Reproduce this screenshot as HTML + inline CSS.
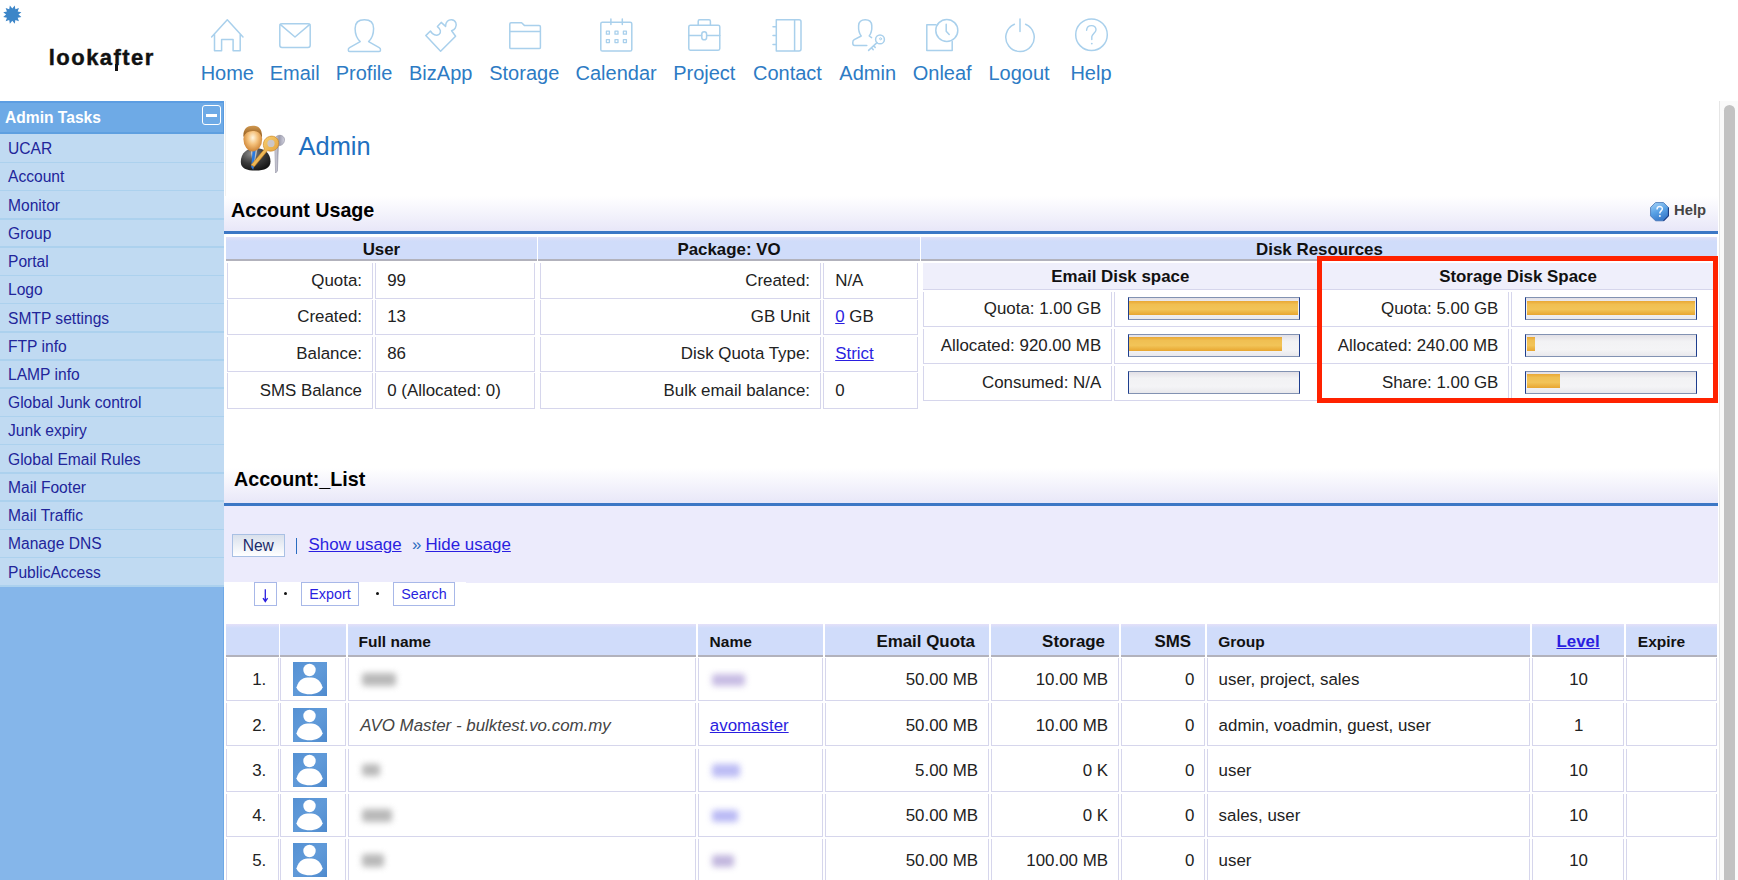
<!DOCTYPE html><html><head><meta charset="utf-8"><style>html,body{margin:0;padding:0;width:1738px;height:880px;overflow:hidden;background:#fff;position:relative;font-family:"Liberation Sans",sans-serif;}.t{position:absolute;white-space:nowrap;}.r{position:absolute;box-sizing:border-box;}svg{position:absolute;overflow:visible;}</style></head><body><svg style="left:0;top:0" width="30" height="30"><polygon points="14.73,5.52 15.40,9.23 18.95,7.95 17.67,11.50 21.38,12.17 18.50,14.60 21.38,17.03 17.67,17.70 18.95,21.25 15.40,19.97 14.73,23.68 12.30,20.80 9.87,23.68 9.20,19.97 5.65,21.25 6.93,17.70 3.22,17.03 6.10,14.60 3.22,12.17 6.93,11.50 5.65,7.95 9.20,9.23 9.87,5.52 12.30,8.40" fill="#3d86c8"/></svg><div class="t" style="top:47.18px;font-size:22px;line-height:22px;color:#111;font-weight:bold;left:48.80px;letter-spacing:1.45px;-webkit-text-stroke:0.45px #111;">lookafter</div><div class="r" style="left:114.60px;top:64.00px;width:3.00px;height:7.20px;background:#111;"></div><div class="t" style="top:62.87px;font-size:20px;line-height:20px;color:#2d7bc4;left:-272.70px;width:1000px;text-align:center;">Home</div><svg style="left:211.4px;top:19.1px" width="34" height="34" fill="none" stroke="#a9d0ec" stroke-width="1.5" stroke-linejoin="round" stroke-linecap="round"><path d="M0.6,18 L16.3,0.8 L32,18 M3.5,14.8 V31.8 H10.6 V20.4 H22.1 V31.8 H29.2 V14.8"/></svg><div class="t" style="top:62.87px;font-size:20px;line-height:20px;color:#2d7bc4;left:-205.25px;width:1000px;text-align:center;">Email</div><svg style="left:278.8px;top:23.0px" width="34" height="34" fill="none" stroke="#a9d0ec" stroke-width="1.5" stroke-linejoin="round" stroke-linecap="round"><rect x="0.8" y="0.8" width="30.4" height="23.6" rx="2.2"/><path d="M1.2,1.4 L16,14 L30.8,1.4"/></svg><div class="t" style="top:62.87px;font-size:20px;line-height:20px;color:#2d7bc4;left:-135.95px;width:1000px;text-align:center;">Profile</div><svg style="left:347.9px;top:18.6px" width="34" height="34" fill="none" stroke="#a9d0ec" stroke-width="1.5" stroke-linejoin="round" stroke-linecap="round"><path d="M12.2,22.6 C8.6,19.2 7.1,14.6 7.1,9.4 C7.1,3.4 10.6,0.8 16.4,0.8 C22.2,0.8 25.6,3.4 25.6,9.4 C25.6,14.6 24.1,19.2 20.6,22.6 L31.2,28.6 C33.2,29.8 32.8,32.6 30.8,32.6 L2,32.6 C0,32.6 -0.4,29.8 1.6,28.6 Z"/></svg><div class="t" style="top:62.87px;font-size:20px;line-height:20px;color:#2d7bc4;left:-59.30px;width:1000px;text-align:center;">BizApp</div><svg style="left:425.0px;top:18.6px" width="34" height="34" fill="none" stroke="#a9d0ec" stroke-width="1.5" stroke-linejoin="round" stroke-linecap="round"><path d="M0.8,16.6 L5.4,12 C7.6,15.8 11.2,17.2 14,15.4 C16.6,13.4 15.6,10 12.4,7.6 L16.2,3.4 L20.6,7.4 C20.4,2.8 23.4,0.6 26.6,0.8 C30.8,1.2 32.4,5.6 30.4,8.8 C29.6,10.2 28.2,11.2 26.6,11.8 L30.6,17.2 L15.6,32.2 Z"/></svg><div class="t" style="top:62.87px;font-size:20px;line-height:20px;color:#2d7bc4;left:24.25px;width:1000px;text-align:center;">Storage</div><svg style="left:508.5px;top:21.5px" width="34" height="34" fill="none" stroke="#a9d0ec" stroke-width="1.5" stroke-linejoin="round" stroke-linecap="round"><path d="M0.8,25.6 V2 Q0.8,0.8 2,0.8 H12.6 L15.6,3.6 H30.2 Q31.4,3.6 31.4,4.8 V25.4 Q31.4,26.6 30.2,26.6 H2 Q0.8,26.6 0.8,25.4 Z M0.8,9.4 H31.4"/></svg><div class="t" style="top:62.87px;font-size:20px;line-height:20px;color:#2d7bc4;left:116.15px;width:1000px;text-align:center;">Calendar</div><svg style="left:600.1px;top:18.7px" width="34" height="34" fill="none" stroke="#a9d0ec" stroke-width="1.5" stroke-linejoin="round" stroke-linecap="round"><rect x="0.8" y="3.2" width="31" height="28.8" rx="1.6"/><path d="M10.9,0 V5.6 M22.3,0 V5.6"/><g stroke-width="1.3"><rect x="6.4" y="12.2" width="3" height="3"/><rect x="15" y="12.2" width="3" height="3"/><rect x="23.4" y="12.2" width="3" height="3"/><rect x="6.4" y="20.6" width="3" height="3"/><rect x="15" y="20.6" width="3" height="3"/><rect x="23.4" y="20.6" width="3" height="3"/></g></svg><div class="t" style="top:62.87px;font-size:20px;line-height:20px;color:#2d7bc4;left:204.25px;width:1000px;text-align:center;">Project</div><svg style="left:688.0px;top:19.2px" width="34" height="34" fill="none" stroke="#a9d0ec" stroke-width="1.5" stroke-linejoin="round" stroke-linecap="round"><rect x="0.8" y="6.2" width="31" height="25" rx="1.6"/><path d="M10.2,6.2 V2.2 Q10.2,0.8 11.6,0.8 H21 Q22.4,0.8 22.4,2.2 V6.2 M0.8,16.6 H13.6 M18.8,16.6 H31.8"/><rect x="13.8" y="12.8" width="4.8" height="8" rx="2.4"/></svg><div class="t" style="top:62.87px;font-size:20px;line-height:20px;color:#2d7bc4;left:287.45px;width:1000px;text-align:center;">Contact</div><svg style="left:772.7px;top:18.7px" width="34" height="34" fill="none" stroke="#a9d0ec" stroke-width="1.5" stroke-linejoin="round" stroke-linecap="round"><path d="M3.3,0.8 H26 Q28,0.8 28,2.8 V30 Q28,32 26,32 H3.3 Z M21.6,0.8 V32 M0,7.8 H3.3 M0,16.6 H3.3 M0,25.4 H3.3"/></svg><div class="t" style="top:62.87px;font-size:20px;line-height:20px;color:#2d7bc4;left:367.70px;width:1000px;text-align:center;">Admin</div><svg style="left:851.9px;top:19.0px" width="34" height="34" fill="none" stroke="#a9d0ec" stroke-width="1.5" stroke-linejoin="round" stroke-linecap="round"><path d="M9.2,17 C7,14 6.4,9.8 6.6,6.6 C6.9,2.6 9.4,0.8 13.2,0.8 C17,0.8 19.5,2.6 19.8,6.6 C20,9.8 19.4,14 17.2,17 L19.6,18.6 M9.2,17 L2.2,20.6 C0.2,21.8 0.2,26.4 2.6,26.4 L14.8,26.4"/><circle cx="28" cy="20.4" r="4.4"/><circle cx="28.6" cy="19.8" r="1" stroke-width="1"/><path d="M25,23.6 L16.6,31.4 M19.4,28.8 L21.2,30.6 M21.6,26.8 L23.2,28.4"/></svg><div class="t" style="top:62.87px;font-size:20px;line-height:20px;color:#2d7bc4;left:442.20px;width:1000px;text-align:center;">Onleaf</div><svg style="left:926.0px;top:19.2px" width="34" height="34" fill="none" stroke="#a9d0ec" stroke-width="1.5" stroke-linejoin="round" stroke-linecap="round"><path d="M10,5.8 H0.8 V31.6 H26.2 V22.4"/><circle cx="20.8" cy="11.4" r="11"/><path d="M20.2,5.2 V12.2 L23.2,15.4"/></svg><div class="t" style="top:62.87px;font-size:20px;line-height:20px;color:#2d7bc4;left:519.05px;width:1000px;text-align:center;">Logout</div><svg style="left:1004.5px;top:18.7px" width="34" height="34" fill="none" stroke="#a9d0ec" stroke-width="1.5" stroke-linejoin="round" stroke-linecap="round"><path d="M15,0 V12.4"/><path d="M9.4,5.2 A14.2,14.2 0 1 0 20.6,5.2"/></svg><div class="t" style="top:62.87px;font-size:20px;line-height:20px;color:#2d7bc4;left:591.00px;width:1000px;text-align:center;">Help</div><svg style="left:1075.0px;top:17.7px" width="34" height="34" fill="none" stroke="#a9d0ec" stroke-width="1.5" stroke-linejoin="round" stroke-linecap="round"><circle cx="16.5" cy="16.7" r="15.8"/><path d="M11.6,12.2 C11.8,8.8 14,7.6 16.6,7.6 C19.2,7.6 21.2,9.4 21,12 C20.8,14.6 17.4,15.8 16.8,18.6 V21.6" stroke-width="1.4"/><circle cx="16.8" cy="25.6" r="0.9" fill="#a9d0ec" stroke="none"/></svg><div class="r" style="left:224.50px;top:100.50px;width:1.10px;height:95.50px;background:#f0f0f0;"></div><div class="r" style="left:0.00px;top:101.00px;width:224.00px;height:32.50px;background:#6eaae6;border-top:2px solid #5c9de2;border-bottom:2px solid #5e9fe0;border-right:1px solid #5a9be0;"></div><div class="t" style="top:109.89px;font-size:15.6px;line-height:15.6px;color:#fff;font-weight:bold;left:5.00px;">Admin Tasks</div><div class="r" style="left:201.70px;top:105.20px;width:19.70px;height:19.70px;border:1.6px solid #fff;border-radius:3px;"></div><div class="r" style="left:205.80px;top:113.90px;width:11.20px;height:2.80px;background:#fff;"></div><div class="r" style="left:0.00px;top:133.50px;width:224.00px;height:453.30px;background:#c0daf2;"></div><div class="r" style="left:0.00px;top:161.60px;width:224.00px;height:1.60px;background:#acd1ee;"></div><div class="t" style="top:141.19px;font-size:15.6px;line-height:15.6px;color:#22259a;left:8.00px;">UCAR</div><div class="r" style="left:0.00px;top:189.83px;width:224.00px;height:1.60px;background:#acd1ee;"></div><div class="t" style="top:169.42px;font-size:15.6px;line-height:15.6px;color:#22259a;left:8.00px;">Account</div><div class="r" style="left:0.00px;top:218.06px;width:224.00px;height:1.60px;background:#acd1ee;"></div><div class="t" style="top:197.65px;font-size:15.6px;line-height:15.6px;color:#22259a;left:8.00px;">Monitor</div><div class="r" style="left:0.00px;top:246.29px;width:224.00px;height:1.60px;background:#acd1ee;"></div><div class="t" style="top:225.88px;font-size:15.6px;line-height:15.6px;color:#22259a;left:8.00px;">Group</div><div class="r" style="left:0.00px;top:274.52px;width:224.00px;height:1.60px;background:#acd1ee;"></div><div class="t" style="top:254.11px;font-size:15.6px;line-height:15.6px;color:#22259a;left:8.00px;">Portal</div><div class="r" style="left:0.00px;top:302.75px;width:224.00px;height:1.60px;background:#acd1ee;"></div><div class="t" style="top:282.34px;font-size:15.6px;line-height:15.6px;color:#22259a;left:8.00px;">Logo</div><div class="r" style="left:0.00px;top:330.98px;width:224.00px;height:1.60px;background:#acd1ee;"></div><div class="t" style="top:310.57px;font-size:15.6px;line-height:15.6px;color:#22259a;left:8.00px;">SMTP settings</div><div class="r" style="left:0.00px;top:359.21px;width:224.00px;height:1.60px;background:#acd1ee;"></div><div class="t" style="top:338.80px;font-size:15.6px;line-height:15.6px;color:#22259a;left:8.00px;">FTP info</div><div class="r" style="left:0.00px;top:387.44px;width:224.00px;height:1.60px;background:#acd1ee;"></div><div class="t" style="top:367.03px;font-size:15.6px;line-height:15.6px;color:#22259a;left:8.00px;">LAMP info</div><div class="r" style="left:0.00px;top:415.67px;width:224.00px;height:1.60px;background:#acd1ee;"></div><div class="t" style="top:395.26px;font-size:15.6px;line-height:15.6px;color:#22259a;left:8.00px;">Global Junk control</div><div class="r" style="left:0.00px;top:443.90px;width:224.00px;height:1.60px;background:#acd1ee;"></div><div class="t" style="top:423.49px;font-size:15.6px;line-height:15.6px;color:#22259a;left:8.00px;">Junk expiry</div><div class="r" style="left:0.00px;top:472.13px;width:224.00px;height:1.60px;background:#acd1ee;"></div><div class="t" style="top:451.72px;font-size:15.6px;line-height:15.6px;color:#22259a;left:8.00px;">Global Email Rules</div><div class="r" style="left:0.00px;top:500.36px;width:224.00px;height:1.60px;background:#acd1ee;"></div><div class="t" style="top:479.95px;font-size:15.6px;line-height:15.6px;color:#22259a;left:8.00px;">Mail Footer</div><div class="r" style="left:0.00px;top:528.59px;width:224.00px;height:1.60px;background:#acd1ee;"></div><div class="t" style="top:508.18px;font-size:15.6px;line-height:15.6px;color:#22259a;left:8.00px;">Mail Traffic</div><div class="r" style="left:0.00px;top:556.82px;width:224.00px;height:1.60px;background:#acd1ee;"></div><div class="t" style="top:536.41px;font-size:15.6px;line-height:15.6px;color:#22259a;left:8.00px;">Manage DNS</div><div class="r" style="left:0.00px;top:585.05px;width:224.00px;height:1.60px;background:#acd1ee;"></div><div class="t" style="top:564.64px;font-size:15.6px;line-height:15.6px;color:#22259a;left:8.00px;">PublicAccess</div><div class="r" style="left:0.00px;top:586.80px;width:224.00px;height:293.20px;background:#85b6ea;border-right:1px solid #6fa9e8;"></div><div class="r" style="left:1718.50px;top:100.50px;width:19.50px;height:779.50px;background:#fafafa;border-left:1px solid #e6e6e6;"></div><div class="r" style="left:1724.10px;top:105.00px;width:11.10px;height:785.00px;background:#c2c2c2;border-radius:5.5px;"></div><svg style="left:240px;top:125px" width="46" height="50" viewBox="0 0 46 50">
<defs>
<radialGradient id="face" cx="0.5" cy="0.45" r="0.6"><stop offset="0" stop-color="#fff6e0"/><stop offset="0.45" stop-color="#f4c07a"/><stop offset="1" stop-color="#c87a2a"/></radialGradient>
<linearGradient id="hair" x1="0" y1="0" x2="0" y2="1"><stop offset="0" stop-color="#d09850"/><stop offset="1" stop-color="#8a5418"/></linearGradient>
<radialGradient id="suit" cx="0.35" cy="0.25" r="0.8"><stop offset="0" stop-color="#8a8a8a"/><stop offset="0.55" stop-color="#3a3a3a"/><stop offset="1" stop-color="#141414"/></radialGradient>
<linearGradient id="gold" x1="0" y1="0" x2="1" y2="1"><stop offset="0" stop-color="#ffe48a"/><stop offset="1" stop-color="#dc8c22"/></linearGradient>
<linearGradient id="silver" x1="0" y1="0" x2="1" y2="0"><stop offset="0" stop-color="#eeeef4"/><stop offset="0.5" stop-color="#9a9aac"/><stop offset="1" stop-color="#d4d4e0"/></linearGradient>
</defs>
<path d="M37,11 C41,9 45,11.5 44.5,15.5 C44,19 41,21 38.4,20.6 L37.4,46 L35.6,48 L34.8,21.5 C32.6,19.5 33.5,13 37,11 Z" fill="url(#silver)" stroke="#8a8a9c" stroke-width="0.6"/>
<path d="M0.8,37 C0.8,28 7,23 15.5,23 C24,23 30.5,28 30.5,36.5 C30.5,43 24.5,45.6 15.6,45.6 C6.6,45.6 0.8,43.5 0.8,37 Z" fill="url(#suit)"/>
<path d="M10.5,24 L13.5,44 L17.5,24 Z" fill="#fff" opacity="0.55"/>
<path d="M12.6,25 L11.2,42 L13.2,45 L15.6,25 Z" fill="#2a7ae0"/>
<ellipse cx="12.8" cy="14" rx="9.4" ry="12.4" fill="url(#face)"/>
<path d="M3.4,12 C3,4 7,0.8 12.8,0.8 C19,0.8 22.6,4.5 21.8,12.5 C20.6,8 17.5,6 12.6,6 C8,6 5,8 3.4,12 Z" fill="url(#hair)"/>
<path d="M11,40 L24.5,24 C22,20 23.5,13 29.5,11.4 C35,10 39.5,14 38.6,19.6 C37.8,25 32,27.4 27.6,25.6 L14.4,41.6 Z" fill="url(#gold)" stroke="#c47a1a" stroke-width="0.6"/>
<circle cx="31" cy="18.4" r="3.6" fill="#c8c8d4" opacity="0.9"/>
</svg><div class="t" style="top:134.10px;font-size:25.4px;line-height:25.4px;color:#2270c0;left:298.60px;">Admin</div><div class="r" style="left:224.00px;top:196.00px;width:1494.00px;height:34.90px;background:linear-gradient(#fff,#e8e7f8);"></div><div class="r" style="left:224.00px;top:230.90px;width:1494.00px;height:3.00px;background:#3c77c5;"></div><div class="t" style="top:200.82px;font-size:19.7px;line-height:19.7px;color:#000;font-weight:bold;left:231.00px;">Account Usage</div><svg style="left:1649.6px;top:201.6px" width="19" height="19.4" viewBox="0 0 20 20.4">
<defs><linearGradient id="hb" x1="0" y1="0" x2="0.4" y2="1"><stop offset="0" stop-color="#a8d4f8"/><stop offset="0.55" stop-color="#5aa2e6"/><stop offset="1" stop-color="#3a7ccc"/></linearGradient></defs>
<polygon points="5.8,0.6 14.2,0.6 19.4,5.8 19.4,14.6 14.2,19.8 5.8,19.8 0.6,14.6 0.6,5.8" fill="url(#hb)" stroke="#3a6ab0" stroke-width="0.8"/>
<path d="M19.4,5.8 V14.6 L14.2,19.8" fill="none" stroke="#1a3a80" stroke-width="1.1"/>
<path d="M7.4,7.8 C7.4,5.8 8.6,4.8 10.2,4.8 C12,4.8 13.1,5.9 13,7.4 C12.9,9 10.8,9.6 10.4,11.4 V12.2" fill="none" stroke="#f4f8ff" stroke-width="1.6"/>
<circle cx="10.4" cy="14.8" r="1.05" fill="#f4f8ff"/>
</svg><div class="t" style="top:203.07px;font-size:14.8px;line-height:14.8px;color:#444;font-weight:bold;left:1674.00px;">Help</div><div class="r" style="left:226.00px;top:236.80px;width:310.80px;height:22.30px;background:linear-gradient(#e4e0f8 0px,#d0dcfa 4px,#d0dcfa);"></div><div class="r" style="left:226.00px;top:259.10px;width:310.80px;height:1.90px;background:#b2b2bc;"></div><div class="t" style="top:242.09px;font-size:16.9px;line-height:16.9px;color:#111;font-weight:bold;left:-118.60px;width:1000px;text-align:center;">User</div><div class="r" style="left:538.20px;top:236.80px;width:381.70px;height:22.30px;background:linear-gradient(#e4e0f8 0px,#d0dcfa 4px,#d0dcfa);"></div><div class="r" style="left:538.20px;top:259.10px;width:381.70px;height:1.90px;background:#b2b2bc;"></div><div class="t" style="top:242.09px;font-size:16.9px;line-height:16.9px;color:#111;font-weight:bold;left:229.05px;width:1000px;text-align:center;">Package: VO</div><div class="r" style="left:921.40px;top:236.80px;width:796.10px;height:22.30px;background:linear-gradient(#e4e0f8 0px,#d0dcfa 4px,#d0dcfa);"></div><div class="r" style="left:921.40px;top:259.10px;width:796.10px;height:1.90px;background:#b2b2bc;"></div><div class="t" style="top:242.09px;font-size:16.9px;line-height:16.9px;color:#111;font-weight:bold;left:819.45px;width:1000px;text-align:center;">Disk Resources</div><div class="r" style="left:227.30px;top:263.20px;width:145.80px;height:35.40px;background:#fff;border:1px solid #d6d6ec;border-top:none;"></div><div class="r" style="left:374.80px;top:263.20px;width:160.20px;height:35.40px;background:#fff;border:1px solid #d6d6ec;border-top:none;"></div><div class="t" style="top:272.79px;font-size:16.9px;line-height:16.9px;color:#222;left:-638.00px;width:1000px;text-align:right;">Quota:</div><div class="t" style="top:272.79px;font-size:16.9px;line-height:16.9px;color:#222;left:387.20px;">99</div><div class="r" style="left:227.30px;top:299.90px;width:145.80px;height:35.40px;background:#fff;border:1px solid #d6d6ec;border-top:none;"></div><div class="r" style="left:374.80px;top:299.90px;width:160.20px;height:35.40px;background:#fff;border:1px solid #d6d6ec;border-top:none;"></div><div class="t" style="top:309.49px;font-size:16.9px;line-height:16.9px;color:#222;left:-638.00px;width:1000px;text-align:right;">Created:</div><div class="t" style="top:309.49px;font-size:16.9px;line-height:16.9px;color:#222;left:387.20px;">13</div><div class="r" style="left:227.30px;top:336.60px;width:145.80px;height:35.40px;background:#fff;border:1px solid #d6d6ec;border-top:none;"></div><div class="r" style="left:374.80px;top:336.60px;width:160.20px;height:35.40px;background:#fff;border:1px solid #d6d6ec;border-top:none;"></div><div class="t" style="top:346.19px;font-size:16.9px;line-height:16.9px;color:#222;left:-638.00px;width:1000px;text-align:right;">Balance:</div><div class="t" style="top:346.19px;font-size:16.9px;line-height:16.9px;color:#222;left:387.20px;">86</div><div class="r" style="left:227.30px;top:373.30px;width:145.80px;height:35.40px;background:#fff;border:1px solid #d6d6ec;border-top:none;"></div><div class="r" style="left:374.80px;top:373.30px;width:160.20px;height:35.40px;background:#fff;border:1px solid #d6d6ec;border-top:none;"></div><div class="t" style="top:382.89px;font-size:16.9px;line-height:16.9px;color:#222;left:-638.00px;width:1000px;text-align:right;">SMS Balance</div><div class="t" style="top:382.89px;font-size:16.9px;line-height:16.9px;color:#222;left:387.20px;">0 (Allocated: 0)</div><div class="r" style="left:539.80px;top:263.20px;width:281.60px;height:35.40px;background:#fff;border:1px solid #d6d6ec;border-top:none;"></div><div class="r" style="left:823.10px;top:263.20px;width:95.00px;height:35.40px;background:#fff;border:1px solid #d6d6ec;border-top:none;"></div><div class="t" style="top:272.79px;font-size:16.9px;line-height:16.9px;color:#222;left:-190.00px;width:1000px;text-align:right;">Created:</div><div class="t" style="top:272.79px;font-size:16.9px;line-height:16.9px;color:#222;left:835.20px;">N/A</div><div class="r" style="left:539.80px;top:299.90px;width:281.60px;height:35.40px;background:#fff;border:1px solid #d6d6ec;border-top:none;"></div><div class="r" style="left:823.10px;top:299.90px;width:95.00px;height:35.40px;background:#fff;border:1px solid #d6d6ec;border-top:none;"></div><div class="t" style="top:309.49px;font-size:16.9px;line-height:16.9px;color:#222;left:-190.00px;width:1000px;text-align:right;">GB Unit</div><div class="t" style="top:309.49px;font-size:16.9px;line-height:16.9px;color:#222;left:835.20px;"><span style="color:#2a1ee0;text-decoration:underline">0</span> GB</div><div class="r" style="left:539.80px;top:336.60px;width:281.60px;height:35.40px;background:#fff;border:1px solid #d6d6ec;border-top:none;"></div><div class="r" style="left:823.10px;top:336.60px;width:95.00px;height:35.40px;background:#fff;border:1px solid #d6d6ec;border-top:none;"></div><div class="t" style="top:346.19px;font-size:16.9px;line-height:16.9px;color:#222;left:-190.00px;width:1000px;text-align:right;">Disk Quota Type:</div><div class="t" style="top:346.19px;font-size:16.9px;line-height:16.9px;color:#222;left:835.20px;"><span style="color:#2a1ee0;text-decoration:underline">Strict</span></div><div class="r" style="left:539.80px;top:373.30px;width:281.60px;height:35.40px;background:#fff;border:1px solid #d6d6ec;border-top:none;"></div><div class="r" style="left:823.10px;top:373.30px;width:95.00px;height:35.40px;background:#fff;border:1px solid #d6d6ec;border-top:none;"></div><div class="t" style="top:382.89px;font-size:16.9px;line-height:16.9px;color:#222;left:-190.00px;width:1000px;text-align:right;">Bulk email balance:</div><div class="t" style="top:382.89px;font-size:16.9px;line-height:16.9px;color:#222;left:835.20px;">0</div><div class="r" style="left:922.70px;top:263.20px;width:395.30px;height:27.00px;background:#efeffb;border-bottom:1px solid #d6d6ec;"></div><div class="t" style="top:269.29px;font-size:16.9px;line-height:16.9px;color:#111;font-weight:bold;left:620.35px;width:1000px;text-align:center;">Email Disk space</div><div class="r" style="left:1319.60px;top:263.20px;width:396.80px;height:27.00px;background:#efeffb;border-bottom:1px solid #d6d6ec;"></div><div class="t" style="top:269.29px;font-size:16.9px;line-height:16.9px;color:#111;font-weight:bold;left:1018.00px;width:1000px;text-align:center;">Storage Disk Space</div><div class="r" style="left:923.10px;top:292.40px;width:188.70px;height:34.90px;background:#fff;border:1px solid #d6d6ec;border-top:none;"></div><div class="r" style="left:1114.00px;top:292.40px;width:204.60px;height:34.90px;background:#fff;border:1px solid #d6d6ec;border-top:none;"></div><div class="t" style="top:301.09px;font-size:16.9px;line-height:16.9px;color:#222;left:101.20px;width:1000px;text-align:right;">Quota: 1.00 GB</div><div class="r" style="left:1127.80px;top:297.40px;width:172.20px;height:22.90px;background:linear-gradient(#e2e0e6,#f2f2f4 30%,#f4f4f6 70%,#e8e8ec);border-top:1.4px solid #8292b2;border-bottom:1.4px solid #8292b2;border-left:1.4px solid #1e3e8e;border-right:1.4px solid #1e3e8e;"></div><div class="r" style="left:1129.20px;top:300.60px;width:169.20px;height:14.10px;background:linear-gradient(#e9a835 0,#f0bf52 25%,#f2c458 60%,#e8a630 100%);"></div><div class="r" style="left:923.10px;top:329.15px;width:188.70px;height:34.90px;background:#fff;border:1px solid #d6d6ec;border-top:none;"></div><div class="r" style="left:1114.00px;top:329.15px;width:204.60px;height:34.90px;background:#fff;border:1px solid #d6d6ec;border-top:none;"></div><div class="t" style="top:337.84px;font-size:16.9px;line-height:16.9px;color:#222;left:101.20px;width:1000px;text-align:right;">Allocated: 920.00 MB</div><div class="r" style="left:1127.80px;top:334.15px;width:172.20px;height:22.90px;background:linear-gradient(#e2e0e6,#f2f2f4 30%,#f4f4f6 70%,#e8e8ec);border-top:1.4px solid #8292b2;border-bottom:1.4px solid #8292b2;border-left:1.4px solid #1e3e8e;border-right:1.4px solid #1e3e8e;"></div><div class="r" style="left:1129.20px;top:337.35px;width:152.80px;height:14.10px;background:linear-gradient(#e9a835 0,#f0bf52 25%,#f2c458 60%,#e8a630 100%);"></div><div class="r" style="left:923.10px;top:365.90px;width:188.70px;height:34.90px;background:#fff;border:1px solid #d6d6ec;border-top:none;"></div><div class="r" style="left:1114.00px;top:365.90px;width:204.60px;height:34.90px;background:#fff;border:1px solid #d6d6ec;border-top:none;"></div><div class="t" style="top:374.59px;font-size:16.9px;line-height:16.9px;color:#222;left:101.20px;width:1000px;text-align:right;">Consumed: N/A</div><div class="r" style="left:1127.80px;top:370.90px;width:172.20px;height:22.90px;background:linear-gradient(#e2e0e6,#f2f2f4 30%,#f4f4f6 70%,#e8e8ec);border-top:1.4px solid #8292b2;border-bottom:1.4px solid #8292b2;border-left:1.4px solid #1e3e8e;border-right:1.4px solid #1e3e8e;"></div><div class="r" style="left:1320.00px;top:292.40px;width:189.00px;height:34.90px;background:#fff;border:1px solid #d6d6ec;border-top:none;"></div><div class="r" style="left:1511.10px;top:292.40px;width:205.30px;height:34.90px;background:#fff;border:1px solid #d6d6ec;border-top:none;"></div><div class="t" style="top:301.09px;font-size:16.9px;line-height:16.9px;color:#222;left:498.40px;width:1000px;text-align:right;">Quota: 5.00 GB</div><div class="r" style="left:1525.20px;top:297.40px;width:171.60px;height:22.90px;background:linear-gradient(#e2e0e6,#f2f2f4 30%,#f4f4f6 70%,#e8e8ec);border-top:1.4px solid #8292b2;border-bottom:1.4px solid #8292b2;border-left:1.4px solid #1e3e8e;border-right:1.4px solid #1e3e8e;"></div><div class="r" style="left:1526.60px;top:300.60px;width:168.60px;height:14.10px;background:linear-gradient(#e9a835 0,#f0bf52 25%,#f2c458 60%,#e8a630 100%);"></div><div class="r" style="left:1320.00px;top:329.15px;width:189.00px;height:34.90px;background:#fff;border:1px solid #d6d6ec;border-top:none;"></div><div class="r" style="left:1511.10px;top:329.15px;width:205.30px;height:34.90px;background:#fff;border:1px solid #d6d6ec;border-top:none;"></div><div class="t" style="top:337.84px;font-size:16.9px;line-height:16.9px;color:#222;left:498.40px;width:1000px;text-align:right;">Allocated: 240.00 MB</div><div class="r" style="left:1525.20px;top:334.15px;width:171.60px;height:22.90px;background:linear-gradient(#e2e0e6,#f2f2f4 30%,#f4f4f6 70%,#e8e8ec);border-top:1.4px solid #8292b2;border-bottom:1.4px solid #8292b2;border-left:1.4px solid #1e3e8e;border-right:1.4px solid #1e3e8e;"></div><div class="r" style="left:1526.60px;top:337.35px;width:8.20px;height:14.10px;background:linear-gradient(#e9a835 0,#f0bf52 25%,#f2c458 60%,#e8a630 100%);"></div><div class="r" style="left:1320.00px;top:365.90px;width:189.00px;height:34.90px;background:#fff;border:1px solid #d6d6ec;border-top:none;"></div><div class="r" style="left:1511.10px;top:365.90px;width:205.30px;height:34.90px;background:#fff;border:1px solid #d6d6ec;border-top:none;"></div><div class="t" style="top:374.59px;font-size:16.9px;line-height:16.9px;color:#222;left:498.40px;width:1000px;text-align:right;">Share: 1.00 GB</div><div class="r" style="left:1525.20px;top:370.90px;width:171.60px;height:22.90px;background:linear-gradient(#e2e0e6,#f2f2f4 30%,#f4f4f6 70%,#e8e8ec);border-top:1.4px solid #8292b2;border-bottom:1.4px solid #8292b2;border-left:1.4px solid #1e3e8e;border-right:1.4px solid #1e3e8e;"></div><div class="r" style="left:1526.60px;top:374.10px;width:33.40px;height:14.10px;background:linear-gradient(#e9a835 0,#f0bf52 25%,#f2c458 60%,#e8a630 100%);"></div><div class="r" style="left:1316.50px;top:255.50px;width:401.10px;height:147.40px;border:5px solid #ff2200;"></div><div class="r" style="left:224.00px;top:468.00px;width:1494.00px;height:34.50px;background:linear-gradient(#fff,#e8e7f8);"></div><div class="r" style="left:224.00px;top:502.50px;width:1494.00px;height:3.00px;background:#3c77c5;"></div><div class="t" style="top:469.82px;font-size:19.7px;line-height:19.7px;color:#000;font-weight:bold;left:234.00px;">Account:_List</div><div class="r" style="left:224.00px;top:505.50px;width:1494.00px;height:77.50px;background:#ecebfc;"></div><div class="r" style="left:231.70px;top:533.70px;width:53.10px;height:23.20px;background:linear-gradient(#d9e0ec,#f4f6fa 70%,#fff);border:1px solid #a9c0e4;"></div><div class="t" style="top:538.39px;font-size:15.6px;line-height:15.6px;color:#1a2a6a;left:-241.75px;width:1000px;text-align:center;">New</div><div class="r" style="left:295.60px;top:538.20px;width:1.60px;height:16.00px;background:#2a6cc0;"></div><div class="t" style="top:537.49px;font-size:16.9px;line-height:16.9px;color:#2a1ee0;text-decoration:underline;left:308.60px;">Show usage</div><div class="t" style="top:537.49px;font-size:16.9px;line-height:16.9px;color:#2a6cc0;left:412.00px;">&raquo;</div><div class="t" style="top:537.49px;font-size:16.9px;line-height:16.9px;color:#2a1ee0;text-decoration:underline;left:425.40px;">Hide usage</div><div class="r" style="left:224.00px;top:582.30px;width:241.50px;height:29.70px;background:#fff;"></div><div class="r" style="left:253.60px;top:582.10px;width:23.50px;height:23.60px;background:#fff;border:1px solid #a8b8e8;"></div><div class="t" style="top:586.90px;font-size:14.3px;line-height:14.3px;color:#2a1ee0;left:-234.65px;width:1000px;text-align:center;"></div><svg style="left:258px;top:585px" width="16" height="20" fill="none" stroke="#2a1ee0" stroke-width="1.3"><path d="M7.3,4.3 V16.4 M5.0,13.2 L7.3,16.6 L9.6,13.2"/></svg><div class="r" style="left:284.0px;top:591.8px;width:3.4px;height:3.4px;border-radius:1.7px;background:#111;"></div><div class="r" style="left:301.00px;top:582.10px;width:58.00px;height:23.60px;background:#fff;border:1px solid #a8b8e8;"></div><div class="t" style="top:586.90px;font-size:14.3px;line-height:14.3px;color:#2a1ee0;left:-170.00px;width:1000px;text-align:center;">Export</div><div class="r" style="left:376.1px;top:591.8px;width:3.4px;height:3.4px;border-radius:1.7px;background:#111;"></div><div class="r" style="left:392.90px;top:582.10px;width:62.10px;height:23.60px;background:#fff;border:1px solid #a8b8e8;"></div><div class="t" style="top:586.90px;font-size:14.3px;line-height:14.3px;color:#2a1ee0;left:-76.05px;width:1000px;text-align:center;">Search</div><div class="r" style="left:226.00px;top:624.10px;width:52.80px;height:30.90px;background:linear-gradient(#e4e0f8 0px,#d0dcfa 4px,#d0dcfa);"></div><div class="r" style="left:226.00px;top:655.00px;width:52.80px;height:1.80px;background:#b2b2bc;"></div><div class="r" style="left:280.20px;top:624.10px;width:65.70px;height:30.90px;background:linear-gradient(#e4e0f8 0px,#d0dcfa 4px,#d0dcfa);"></div><div class="r" style="left:280.20px;top:655.00px;width:65.70px;height:1.80px;background:#b2b2bc;"></div><div class="r" style="left:347.60px;top:624.10px;width:348.80px;height:30.90px;background:linear-gradient(#e4e0f8 0px,#d0dcfa 4px,#d0dcfa);"></div><div class="r" style="left:347.60px;top:655.00px;width:348.80px;height:1.80px;background:#b2b2bc;"></div><div class="r" style="left:698.20px;top:624.10px;width:124.90px;height:30.90px;background:linear-gradient(#e4e0f8 0px,#d0dcfa 4px,#d0dcfa);"></div><div class="r" style="left:698.20px;top:655.00px;width:124.90px;height:1.80px;background:#b2b2bc;"></div><div class="r" style="left:824.50px;top:624.10px;width:164.50px;height:30.90px;background:linear-gradient(#e4e0f8 0px,#d0dcfa 4px,#d0dcfa);"></div><div class="r" style="left:824.50px;top:655.00px;width:164.50px;height:1.80px;background:#b2b2bc;"></div><div class="r" style="left:990.80px;top:624.10px;width:128.20px;height:30.90px;background:linear-gradient(#e4e0f8 0px,#d0dcfa 4px,#d0dcfa);"></div><div class="r" style="left:990.80px;top:655.00px;width:128.20px;height:1.80px;background:#b2b2bc;"></div><div class="r" style="left:1120.70px;top:624.10px;width:84.30px;height:30.90px;background:linear-gradient(#e4e0f8 0px,#d0dcfa 4px,#d0dcfa);"></div><div class="r" style="left:1120.70px;top:655.00px;width:84.30px;height:1.80px;background:#b2b2bc;"></div><div class="r" style="left:1207.00px;top:624.10px;width:323.00px;height:30.90px;background:linear-gradient(#e4e0f8 0px,#d0dcfa 4px,#d0dcfa);"></div><div class="r" style="left:1207.00px;top:655.00px;width:323.00px;height:1.80px;background:#b2b2bc;"></div><div class="r" style="left:1531.70px;top:624.10px;width:92.80px;height:30.90px;background:linear-gradient(#e4e0f8 0px,#d0dcfa 4px,#d0dcfa);"></div><div class="r" style="left:1531.70px;top:655.00px;width:92.80px;height:1.80px;background:#b2b2bc;"></div><div class="r" style="left:1626.30px;top:624.10px;width:90.70px;height:30.90px;background:linear-gradient(#e4e0f8 0px,#d0dcfa 4px,#d0dcfa);"></div><div class="r" style="left:1626.30px;top:655.00px;width:90.70px;height:1.80px;background:#b2b2bc;"></div><div class="t" style="top:634.28px;font-size:15.5px;line-height:15.5px;color:#111;font-weight:bold;left:358.60px;">Full name</div><div class="t" style="top:634.28px;font-size:15.5px;line-height:15.5px;color:#111;font-weight:bold;left:709.60px;">Name</div><div class="t" style="top:633.69px;font-size:16.9px;line-height:16.9px;color:#111;font-weight:bold;left:-25.00px;width:1000px;text-align:right;">Email Quota</div><div class="t" style="top:633.69px;font-size:16.9px;line-height:16.9px;color:#111;font-weight:bold;left:105.00px;width:1000px;text-align:right;">Storage</div><div class="t" style="top:633.69px;font-size:16.9px;line-height:16.9px;color:#111;font-weight:bold;left:191.00px;width:1000px;text-align:right;">SMS</div><div class="t" style="top:634.28px;font-size:15.5px;line-height:15.5px;color:#111;font-weight:bold;left:1218.20px;">Group</div><div class="t" style="top:633.69px;font-size:16.9px;line-height:16.9px;color:#2a1ee0;font-weight:bold;text-decoration:underline;left:1078.10px;width:1000px;text-align:center;">Level</div><div class="t" style="top:634.28px;font-size:15.5px;line-height:15.5px;color:#111;font-weight:bold;left:1637.80px;">Expire</div><svg width="0" height="0" style="left:0;top:0"><defs><linearGradient id="avg" x1="0" y1="0" x2="1" y2="1"><stop offset="0" stop-color="#4d8ad0" stop-opacity="0.5"/><stop offset="0.5" stop-color="#6aa2de" stop-opacity="0.3"/><stop offset="1" stop-color="#3f7cc4" stop-opacity="0.5"/></linearGradient></defs></svg><div class="r" style="left:226.00px;top:658.00px;width:52.80px;height:43.20px;background:#fff;border:1px solid #d6d6ec;border-top:none;"></div><div class="r" style="left:280.20px;top:658.00px;width:65.70px;height:43.20px;background:#fff;border:1px solid #d6d6ec;border-top:none;"></div><div class="r" style="left:347.60px;top:658.00px;width:348.80px;height:43.20px;background:#fff;border:1px solid #d6d6ec;border-top:none;"></div><div class="r" style="left:698.20px;top:658.00px;width:124.90px;height:43.20px;background:#fff;border:1px solid #d6d6ec;border-top:none;"></div><div class="r" style="left:824.50px;top:658.00px;width:164.50px;height:43.20px;background:#fff;border:1px solid #d6d6ec;border-top:none;"></div><div class="r" style="left:990.80px;top:658.00px;width:128.20px;height:43.20px;background:#fff;border:1px solid #d6d6ec;border-top:none;"></div><div class="r" style="left:1120.70px;top:658.00px;width:84.30px;height:43.20px;background:#fff;border:1px solid #d6d6ec;border-top:none;"></div><div class="r" style="left:1207.00px;top:658.00px;width:323.00px;height:43.20px;background:#fff;border:1px solid #d6d6ec;border-top:none;"></div><div class="r" style="left:1531.70px;top:658.00px;width:92.80px;height:43.20px;background:#fff;border:1px solid #d6d6ec;border-top:none;"></div><div class="r" style="left:1626.30px;top:658.00px;width:90.70px;height:43.20px;background:#fff;border:1px solid #d6d6ec;border-top:none;"></div><div class="t" style="top:672.49px;font-size:16.9px;line-height:16.9px;color:#222;left:-733.70px;width:1000px;text-align:right;">1.</div><svg style="left:293px;top:662.40px" width="34" height="34" viewBox="0 0 34 34">
<rect width="34" height="34" fill="#5b96d6"/>
<rect width="34" height="34" fill="url(#avg)"/>
<circle cx="16.5" cy="8" r="6.2" fill="#fff"/>
<path d="M3.5,25.2 C6,16.6 11,15.4 16.5,15.4 C22,15.4 27,16.6 29.6,25.2 C28.4,30 22.6,32.2 16.5,32.2 C10.4,32.2 4.6,30 3.5,25.2 Z" fill="#fff"/>
</svg><div class="r" style="left:361.5px;top:673.40px;width:34px;height:12.6px;background:#8a8a8a;filter:blur(3.2px);opacity:0.6;border-radius:3px;"></div><div class="r" style="left:711.5px;top:673.80px;width:33px;height:12.6px;background:#b0a0d8;filter:blur(3.2px);opacity:0.7;border-radius:3px;"></div><div class="t" style="top:672.49px;font-size:16.9px;line-height:16.9px;color:#222;left:-22.00px;width:1000px;text-align:right;">50.00 MB</div><div class="t" style="top:672.49px;font-size:16.9px;line-height:16.9px;color:#222;left:108.00px;width:1000px;text-align:right;">10.00 MB</div><div class="t" style="top:672.49px;font-size:16.9px;line-height:16.9px;color:#222;left:194.50px;width:1000px;text-align:right;">0</div><div class="t" style="top:672.49px;font-size:16.9px;line-height:16.9px;color:#222;left:1218.60px;">user, project, sales</div><div class="t" style="top:672.49px;font-size:16.9px;line-height:16.9px;color:#222;left:1078.60px;width:1000px;text-align:center;">10</div><div class="r" style="left:226.00px;top:703.25px;width:52.80px;height:43.20px;background:#fff;border:1px solid #d6d6ec;border-top:none;"></div><div class="r" style="left:280.20px;top:703.25px;width:65.70px;height:43.20px;background:#fff;border:1px solid #d6d6ec;border-top:none;"></div><div class="r" style="left:347.60px;top:703.25px;width:348.80px;height:43.20px;background:#fff;border:1px solid #d6d6ec;border-top:none;"></div><div class="r" style="left:698.20px;top:703.25px;width:124.90px;height:43.20px;background:#fff;border:1px solid #d6d6ec;border-top:none;"></div><div class="r" style="left:824.50px;top:703.25px;width:164.50px;height:43.20px;background:#fff;border:1px solid #d6d6ec;border-top:none;"></div><div class="r" style="left:990.80px;top:703.25px;width:128.20px;height:43.20px;background:#fff;border:1px solid #d6d6ec;border-top:none;"></div><div class="r" style="left:1120.70px;top:703.25px;width:84.30px;height:43.20px;background:#fff;border:1px solid #d6d6ec;border-top:none;"></div><div class="r" style="left:1207.00px;top:703.25px;width:323.00px;height:43.20px;background:#fff;border:1px solid #d6d6ec;border-top:none;"></div><div class="r" style="left:1531.70px;top:703.25px;width:92.80px;height:43.20px;background:#fff;border:1px solid #d6d6ec;border-top:none;"></div><div class="r" style="left:1626.30px;top:703.25px;width:90.70px;height:43.20px;background:#fff;border:1px solid #d6d6ec;border-top:none;"></div><div class="t" style="top:717.74px;font-size:16.9px;line-height:16.9px;color:#222;left:-733.70px;width:1000px;text-align:right;">2.</div><svg style="left:293px;top:707.65px" width="34" height="34" viewBox="0 0 34 34">
<rect width="34" height="34" fill="#5b96d6"/>
<rect width="34" height="34" fill="url(#avg)"/>
<circle cx="16.5" cy="8" r="6.2" fill="#fff"/>
<path d="M3.5,25.2 C6,16.6 11,15.4 16.5,15.4 C22,15.4 27,16.6 29.6,25.2 C28.4,30 22.6,32.2 16.5,32.2 C10.4,32.2 4.6,30 3.5,25.2 Z" fill="#fff"/>
</svg><div class="t" style="top:717.74px;font-size:16.9px;line-height:16.9px;color:#444;font-style:italic;left:360.20px;">AVO Master - bulktest.vo.com.my</div><div class="t" style="top:717.74px;font-size:16.9px;line-height:16.9px;color:#2a1ee0;text-decoration:underline;left:709.80px;">avomaster</div><div class="t" style="top:717.74px;font-size:16.9px;line-height:16.9px;color:#222;left:-22.00px;width:1000px;text-align:right;">50.00 MB</div><div class="t" style="top:717.74px;font-size:16.9px;line-height:16.9px;color:#222;left:108.00px;width:1000px;text-align:right;">10.00 MB</div><div class="t" style="top:717.74px;font-size:16.9px;line-height:16.9px;color:#222;left:194.50px;width:1000px;text-align:right;">0</div><div class="t" style="top:717.74px;font-size:16.9px;line-height:16.9px;color:#222;left:1218.60px;">admin, voadmin, guest, user</div><div class="t" style="top:717.74px;font-size:16.9px;line-height:16.9px;color:#222;left:1078.60px;width:1000px;text-align:center;">1</div><div class="r" style="left:226.00px;top:748.50px;width:52.80px;height:43.20px;background:#fff;border:1px solid #d6d6ec;border-top:none;"></div><div class="r" style="left:280.20px;top:748.50px;width:65.70px;height:43.20px;background:#fff;border:1px solid #d6d6ec;border-top:none;"></div><div class="r" style="left:347.60px;top:748.50px;width:348.80px;height:43.20px;background:#fff;border:1px solid #d6d6ec;border-top:none;"></div><div class="r" style="left:698.20px;top:748.50px;width:124.90px;height:43.20px;background:#fff;border:1px solid #d6d6ec;border-top:none;"></div><div class="r" style="left:824.50px;top:748.50px;width:164.50px;height:43.20px;background:#fff;border:1px solid #d6d6ec;border-top:none;"></div><div class="r" style="left:990.80px;top:748.50px;width:128.20px;height:43.20px;background:#fff;border:1px solid #d6d6ec;border-top:none;"></div><div class="r" style="left:1120.70px;top:748.50px;width:84.30px;height:43.20px;background:#fff;border:1px solid #d6d6ec;border-top:none;"></div><div class="r" style="left:1207.00px;top:748.50px;width:323.00px;height:43.20px;background:#fff;border:1px solid #d6d6ec;border-top:none;"></div><div class="r" style="left:1531.70px;top:748.50px;width:92.80px;height:43.20px;background:#fff;border:1px solid #d6d6ec;border-top:none;"></div><div class="r" style="left:1626.30px;top:748.50px;width:90.70px;height:43.20px;background:#fff;border:1px solid #d6d6ec;border-top:none;"></div><div class="t" style="top:762.99px;font-size:16.9px;line-height:16.9px;color:#222;left:-733.70px;width:1000px;text-align:right;">3.</div><svg style="left:293px;top:752.90px" width="34" height="34" viewBox="0 0 34 34">
<rect width="34" height="34" fill="#5b96d6"/>
<rect width="34" height="34" fill="url(#avg)"/>
<circle cx="16.5" cy="8" r="6.2" fill="#fff"/>
<path d="M3.5,25.2 C6,16.6 11,15.4 16.5,15.4 C22,15.4 27,16.6 29.6,25.2 C28.4,30 22.6,32.2 16.5,32.2 C10.4,32.2 4.6,30 3.5,25.2 Z" fill="#fff"/>
</svg><div class="r" style="left:361.5px;top:763.90px;width:18px;height:12.6px;background:#8a8a8a;filter:blur(3.2px);opacity:0.6;border-radius:3px;"></div><div class="r" style="left:711.5px;top:764.30px;width:28px;height:12.6px;background:#a0a0f0;filter:blur(3.2px);opacity:0.7;border-radius:3px;"></div><div class="t" style="top:762.99px;font-size:16.9px;line-height:16.9px;color:#222;left:-22.00px;width:1000px;text-align:right;">5.00 MB</div><div class="t" style="top:762.99px;font-size:16.9px;line-height:16.9px;color:#222;left:108.00px;width:1000px;text-align:right;">0 K</div><div class="t" style="top:762.99px;font-size:16.9px;line-height:16.9px;color:#222;left:194.50px;width:1000px;text-align:right;">0</div><div class="t" style="top:762.99px;font-size:16.9px;line-height:16.9px;color:#222;left:1218.60px;">user</div><div class="t" style="top:762.99px;font-size:16.9px;line-height:16.9px;color:#222;left:1078.60px;width:1000px;text-align:center;">10</div><div class="r" style="left:226.00px;top:793.75px;width:52.80px;height:43.20px;background:#fff;border:1px solid #d6d6ec;border-top:none;"></div><div class="r" style="left:280.20px;top:793.75px;width:65.70px;height:43.20px;background:#fff;border:1px solid #d6d6ec;border-top:none;"></div><div class="r" style="left:347.60px;top:793.75px;width:348.80px;height:43.20px;background:#fff;border:1px solid #d6d6ec;border-top:none;"></div><div class="r" style="left:698.20px;top:793.75px;width:124.90px;height:43.20px;background:#fff;border:1px solid #d6d6ec;border-top:none;"></div><div class="r" style="left:824.50px;top:793.75px;width:164.50px;height:43.20px;background:#fff;border:1px solid #d6d6ec;border-top:none;"></div><div class="r" style="left:990.80px;top:793.75px;width:128.20px;height:43.20px;background:#fff;border:1px solid #d6d6ec;border-top:none;"></div><div class="r" style="left:1120.70px;top:793.75px;width:84.30px;height:43.20px;background:#fff;border:1px solid #d6d6ec;border-top:none;"></div><div class="r" style="left:1207.00px;top:793.75px;width:323.00px;height:43.20px;background:#fff;border:1px solid #d6d6ec;border-top:none;"></div><div class="r" style="left:1531.70px;top:793.75px;width:92.80px;height:43.20px;background:#fff;border:1px solid #d6d6ec;border-top:none;"></div><div class="r" style="left:1626.30px;top:793.75px;width:90.70px;height:43.20px;background:#fff;border:1px solid #d6d6ec;border-top:none;"></div><div class="t" style="top:808.24px;font-size:16.9px;line-height:16.9px;color:#222;left:-733.70px;width:1000px;text-align:right;">4.</div><svg style="left:293px;top:798.15px" width="34" height="34" viewBox="0 0 34 34">
<rect width="34" height="34" fill="#5b96d6"/>
<rect width="34" height="34" fill="url(#avg)"/>
<circle cx="16.5" cy="8" r="6.2" fill="#fff"/>
<path d="M3.5,25.2 C6,16.6 11,15.4 16.5,15.4 C22,15.4 27,16.6 29.6,25.2 C28.4,30 22.6,32.2 16.5,32.2 C10.4,32.2 4.6,30 3.5,25.2 Z" fill="#fff"/>
</svg><div class="r" style="left:361.5px;top:809.15px;width:30px;height:12.6px;background:#8a8a8a;filter:blur(3.2px);opacity:0.6;border-radius:3px;"></div><div class="r" style="left:711.5px;top:809.55px;width:26px;height:12.6px;background:#9c9cf0;filter:blur(3.2px);opacity:0.7;border-radius:3px;"></div><div class="t" style="top:808.24px;font-size:16.9px;line-height:16.9px;color:#222;left:-22.00px;width:1000px;text-align:right;">50.00 MB</div><div class="t" style="top:808.24px;font-size:16.9px;line-height:16.9px;color:#222;left:108.00px;width:1000px;text-align:right;">0 K</div><div class="t" style="top:808.24px;font-size:16.9px;line-height:16.9px;color:#222;left:194.50px;width:1000px;text-align:right;">0</div><div class="t" style="top:808.24px;font-size:16.9px;line-height:16.9px;color:#222;left:1218.60px;">sales, user</div><div class="t" style="top:808.24px;font-size:16.9px;line-height:16.9px;color:#222;left:1078.60px;width:1000px;text-align:center;">10</div><div class="r" style="left:226.00px;top:839.00px;width:52.80px;height:43.20px;background:#fff;border:1px solid #d6d6ec;border-top:none;"></div><div class="r" style="left:280.20px;top:839.00px;width:65.70px;height:43.20px;background:#fff;border:1px solid #d6d6ec;border-top:none;"></div><div class="r" style="left:347.60px;top:839.00px;width:348.80px;height:43.20px;background:#fff;border:1px solid #d6d6ec;border-top:none;"></div><div class="r" style="left:698.20px;top:839.00px;width:124.90px;height:43.20px;background:#fff;border:1px solid #d6d6ec;border-top:none;"></div><div class="r" style="left:824.50px;top:839.00px;width:164.50px;height:43.20px;background:#fff;border:1px solid #d6d6ec;border-top:none;"></div><div class="r" style="left:990.80px;top:839.00px;width:128.20px;height:43.20px;background:#fff;border:1px solid #d6d6ec;border-top:none;"></div><div class="r" style="left:1120.70px;top:839.00px;width:84.30px;height:43.20px;background:#fff;border:1px solid #d6d6ec;border-top:none;"></div><div class="r" style="left:1207.00px;top:839.00px;width:323.00px;height:43.20px;background:#fff;border:1px solid #d6d6ec;border-top:none;"></div><div class="r" style="left:1531.70px;top:839.00px;width:92.80px;height:43.20px;background:#fff;border:1px solid #d6d6ec;border-top:none;"></div><div class="r" style="left:1626.30px;top:839.00px;width:90.70px;height:43.20px;background:#fff;border:1px solid #d6d6ec;border-top:none;"></div><div class="t" style="top:853.49px;font-size:16.9px;line-height:16.9px;color:#222;left:-733.70px;width:1000px;text-align:right;">5.</div><svg style="left:293px;top:843.40px" width="34" height="34" viewBox="0 0 34 34">
<rect width="34" height="34" fill="#5b96d6"/>
<rect width="34" height="34" fill="url(#avg)"/>
<circle cx="16.5" cy="8" r="6.2" fill="#fff"/>
<path d="M3.5,25.2 C6,16.6 11,15.4 16.5,15.4 C22,15.4 27,16.6 29.6,25.2 C28.4,30 22.6,32.2 16.5,32.2 C10.4,32.2 4.6,30 3.5,25.2 Z" fill="#fff"/>
</svg><div class="r" style="left:361.5px;top:854.40px;width:22px;height:12.6px;background:#8a8a8a;filter:blur(3.2px);opacity:0.6;border-radius:3px;"></div><div class="r" style="left:711.5px;top:854.80px;width:22px;height:12.6px;background:#a898d0;filter:blur(3.2px);opacity:0.7;border-radius:3px;"></div><div class="t" style="top:853.49px;font-size:16.9px;line-height:16.9px;color:#222;left:-22.00px;width:1000px;text-align:right;">50.00 MB</div><div class="t" style="top:853.49px;font-size:16.9px;line-height:16.9px;color:#222;left:108.00px;width:1000px;text-align:right;">100.00 MB</div><div class="t" style="top:853.49px;font-size:16.9px;line-height:16.9px;color:#222;left:194.50px;width:1000px;text-align:right;">0</div><div class="t" style="top:853.49px;font-size:16.9px;line-height:16.9px;color:#222;left:1218.60px;">user</div><div class="t" style="top:853.49px;font-size:16.9px;line-height:16.9px;color:#222;left:1078.60px;width:1000px;text-align:center;">10</div></body></html>
